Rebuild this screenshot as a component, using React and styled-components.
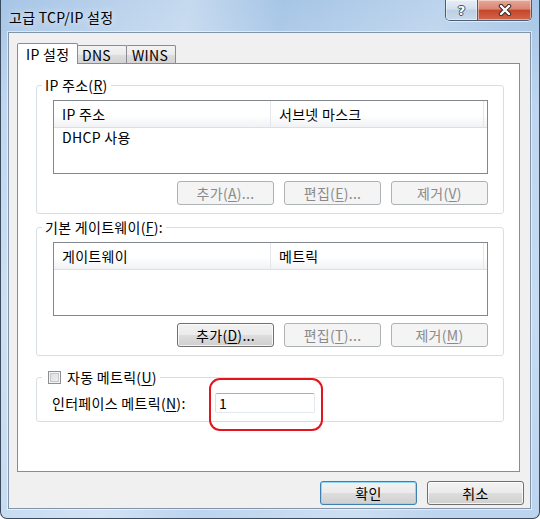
import React from "react";
import styled, { createGlobalStyle, css } from "styled-components";

const GlobalStyle = createGlobalStyle`
  html, body {
    margin: 0;
    padding: 0;
  }
  body {
    font-family: "Noto Sans CJK KR", "Noto Sans", sans-serif;
    font-size: 14px;
    letter-spacing: 0.3px;
    color: #000;
  }
`;

const Frame = styled.div`
  box-sizing: border-box;
  width: 540px;
  height: 519px;
  display: flex;
  flex-direction: column;
  background:
    linear-gradient(100deg, rgba(255, 255, 255, 0) 0%, rgba(255, 255, 255, 0.35) 30%, rgba(255, 255, 255, 0) 45%, rgba(255, 255, 255, 0.25) 70%, rgba(255, 255, 255, 0) 85%),
    linear-gradient(180deg, #a6c5e6 0%, #bdd5ee 20%, #c7dcf1 60%, #bcd4ee 100%);
  border: 1px solid #3a4b60;
  border-top: none;
  border-radius: 0 0 7px 7px;
  overflow: hidden;
`;

const TitleBar = styled.div`
  height: 32px;
  flex-shrink: 0;
  display: flex;
  justify-content: space-between;
  align-items: flex-start;
  padding-left: 8px;
`;

const Title = styled.div`
  margin-top: 8px;
  line-height: 18px;
  font-size: 14px;
  color: #000;
  text-shadow: 0 0 7px rgba(255, 255, 255, 0.95);
`;

const Captions = styled.div`
  display: flex;
  margin-right: 7px;
  border: 1px solid #4a5d75;
  border-top: none;
  border-radius: 0 0 5px 5px;
  overflow: hidden;
  box-shadow: 0 1px 0 rgba(255, 255, 255, 0.6);
`;

const CaptionButton = styled.div`
  height: 20px;
  width: ${(p) => p.$w}px;
  display: flex;
  align-items: center;
  justify-content: center;
  box-shadow: inset 0 0 0 1px rgba(255, 255, 255, 0.45);
  background: ${(p) =>
    p.$close
      ? "linear-gradient(180deg, #e8a797 0%, #d98572 45%, #c4462c 52%, #d2674c 100%)"
      : "linear-gradient(180deg, #e6eef7 0%, #d3dfec 45%, #bccfe3 52%, #cadaea 100%)"};
  & + & {
    border-left: 1px solid #4a5d75;
  }
`;

const HelpGlyph = styled.span`
  font-family: "DejaVu Sans", sans-serif;
  font-weight: bold;
  font-size: 13px;
  line-height: 13px;
  letter-spacing: 0;
  color: #fff;
  text-shadow: -1px 0 #3b4d63, 1px 0 #3b4d63, 0 -1px #3b4d63, 0 1px #3b4d63;
`;

const Client = styled.div`
  flex: 1;
  margin: 0 8px 9px 7px;
  background: #f0f0f0;
  border: 1px solid #8294ab;
  box-shadow: 0 0 0 1px rgba(255, 255, 255, 0.55);
  display: flex;
  flex-direction: column;
  padding: 10px 0 0 8px;
`;

const TabStrip = styled.div`
  display: flex;
  align-items: flex-end;
  height: 20px;
`;

const Tab = styled.div`
  box-sizing: border-box;
  position: relative;
  width: ${(p) => p.$w}px;
  height: ${(p) => (p.$active ? 21 : 18)}px;
  margin-bottom: ${(p) => (p.$active ? -1 : 0)}px;
  margin-right: ${(p) => (p.$active ? -2 : 0)}px;
  margin-left: ${(p) => (p.$overlap ? -1 : 0)}px;
  padding: ${(p) => (p.$active ? "2px 0 0 8px" : "1px 0 0 5px")};
  line-height: 17px;
  border: 1px solid #898c95;
  border-bottom: none;
  border-radius: 2px 2px 0 0;
  z-index: ${(p) => (p.$active ? 2 : 1)};
  background: ${(p) =>
    p.$active
      ? "#fff"
      : "linear-gradient(180deg, #f3f3f3 0%, #ebebeb 50%, #dddddd 52%, #d3d3d3 100%)"};
`;

const Panel = styled.div`
  box-sizing: border-box;
  position: relative;
  height: 409px;
  margin-right: 10px;
  background: #fff;
  border: 1px solid #898c95;
  padding: 13px 15px 0 18px;
  display: flex;
  flex-direction: column;
`;

const Group = styled.fieldset`
  margin: ${(p) => p.$mt || 0}px 0 0 0;
  padding: 0;
  min-width: 0;
  border: 1px solid #d5dfe5;
  border-radius: 3px;
`;

const Legend = styled.legend`
  margin-left: 5px;
  padding: 0 3px;
  line-height: 16px;
  display: flex;
  align-items: center;
`;

const GroupBody = styled.div`
  padding: 7px 15px 8px 16px;
`;

const ListBox = styled.div`
  box-sizing: border-box;
  height: 74px;
  border: 1px solid #828790;
  background: #fff;
`;

const ListHeader = styled.div`
  display: flex;
  box-sizing: border-box;
  height: 27px;
  border-bottom: 1px solid #dcdfe3;
  background: linear-gradient(180deg, #ffffff 0%, #ffffff 55%, #f1f2f4 100%);
`;

const HeaderCell = styled.div`
  box-sizing: border-box;
  width: ${(p) => p.$w}px;
  padding: 3px 0 0 8px;
  line-height: 20px;
  border-right: 1px solid #e3e6ea;
`;

const Row = styled.div`
  height: 18px;
  line-height: 18px;
  padding-left: 8px;
`;

const ButtonRow = styled.div`
  display: flex;
  justify-content: flex-end;
  gap: 10px;
  margin-top: 7px;
`;

const Button = styled.button`
  box-sizing: border-box;
  width: 97px;
  height: 24px;
  padding: 0;
  font-family: inherit;
  font-size: 14px;
  letter-spacing: 0.3px;
  line-height: 18px;
  color: #000;
  border: 1px solid #707070;
  border-radius: 3px;
  background: linear-gradient(180deg, #f2f2f2 0%, #ebebeb 50%, #dddddd 52%, #cfcfcf 100%);
  box-shadow: inset 0 0 0 1px rgba(255, 255, 255, 0.75);
  ${(p) =>
    p.disabled &&
    css`
      color: #8a8a8a;
      border-color: #adb2b5;
      background: #f4f4f4;
      box-shadow: none;
    `}
  ${(p) =>
    p.$default &&
    css`
      border-color: #3c7fb1;
      box-shadow: inset 0 0 0 1px #8fd8f7;
    `}
`;

const Key = styled.span`
  text-decoration: underline;
  text-underline-offset: 2px;
`;

const Checkbox = styled.span`
  box-sizing: border-box;
  width: 13px;
  height: 13px;
  margin: 0 6px 0 3px;
  border: 1px solid #8e8f8f;
  background: linear-gradient(135deg, #d9dbde 0%, #f2f2f2 100%);
  box-shadow: inset 0 0 0 1px #f4f4f4, inset 0 0 0 2px #c5c8cc;
`;

const MetricRow = styled.div`
  display: flex;
  align-items: center;
  padding: 8px 15px 8px 15px;
`;

const MetricLabel = styled.div`
  width: 163px;
  line-height: 20px;
`;

const InputWrap = styled.div`
  position: relative;
`;

const Input = styled.div`
  box-sizing: border-box;
  width: 100px;
  height: 20px;
  padding-left: 3px;
  line-height: 18px;
  background: #fff;
  border: 1px solid #e3e9ef;
  border-top-color: #abadb3;
  border-left-color: #dbdfe6;
  border-radius: 2px;
`;

const Highlight = styled.div`
  position: absolute;
  top: -15px;
  left: -6px;
  right: -8px;
  bottom: -18px;
  border: 2px solid #e4141c;
  border-radius: 11px;
  pointer-events: none;
`;

const Footer = styled.div`
  display: flex;
  justify-content: flex-end;
  gap: 10px;
  margin-top: 9px;
  padding-right: 6px;
`;

const CloseIcon = () => (
  <svg width="16" height="12" viewBox="0 0 16 12">
    <path d="M4 2 L12 10 M12 2 L4 10" stroke="#3b2a2a" strokeWidth="4.4" strokeLinecap="round" />
    <path d="M4 2 L12 10 M12 2 L4 10" stroke="#fff" strokeWidth="2.4" strokeLinecap="round" />
  </svg>
);

const ListView = ({ columns, rows }) => (
  <ListBox>
    <ListHeader>
      <HeaderCell $w={217}>{columns[0]}</HeaderCell>
      <HeaderCell $w={213}>{columns[1]}</HeaderCell>
    </ListHeader>
    {rows.map((r) => (
      <Row key={r}>{r}</Row>
    ))}
  </ListBox>
);

export default function App() {
  return (
    <>
      <GlobalStyle />
      <Frame>
        <TitleBar>
          <Title>고급 TCP/IP 설정</Title>
          <Captions>
            <CaptionButton $w={31}>
              <HelpGlyph>?</HelpGlyph>
            </CaptionButton>
            <CaptionButton $w={53} $close>
              <CloseIcon />
            </CaptionButton>
          </Captions>
        </TitleBar>
        <Client>
          <TabStrip>
            <Tab $active $w={61}>IP 설정</Tab>
            <Tab $w={51}>DNS</Tab>
            <Tab $w={50} $overlap>WINS</Tab>
          </TabStrip>
          <Panel>
            <Group>
              <Legend>
                IP 주소(<Key>R</Key>)
              </Legend>
              <GroupBody>
                <ListView columns={["IP 주소", "서브넷 마스크"]} rows={["DHCP 사용"]} />
                <ButtonRow>
                  <Button disabled>
                    추가(<Key>A</Key>)...
                  </Button>
                  <Button disabled>
                    편집(<Key>E</Key>)...
                  </Button>
                  <Button disabled>
                    제거(<Key>V</Key>)
                  </Button>
                </ButtonRow>
              </GroupBody>
            </Group>
            <Group $mt={5}>
              <Legend>
                기본 게이트웨이(<Key>F</Key>):
              </Legend>
              <GroupBody>
                <ListView columns={["게이트웨이", "메트릭"]} rows={[]} />
                <ButtonRow>
                  <Button>
                    추가(<Key>D</Key>)...
                  </Button>
                  <Button disabled>
                    편집(<Key>T</Key>)...
                  </Button>
                  <Button disabled>
                    제거(<Key>M</Key>)
                  </Button>
                </ButtonRow>
              </GroupBody>
            </Group>
            <Group $mt={13}>
              <Legend>
                <Checkbox />
                자동 메트릭(<Key>U</Key>)
              </Legend>
              <MetricRow>
                <MetricLabel>
                  인터페이스 메트릭(<Key>N</Key>):
                </MetricLabel>
                <InputWrap>
                  <Input>1</Input>
                  <Highlight />
                </InputWrap>
              </MetricRow>
            </Group>
          </Panel>
          <Footer>
            <Button $default>확인</Button>
            <Button>취소</Button>
          </Footer>
        </Client>
      </Frame>
    </>
  );
}
